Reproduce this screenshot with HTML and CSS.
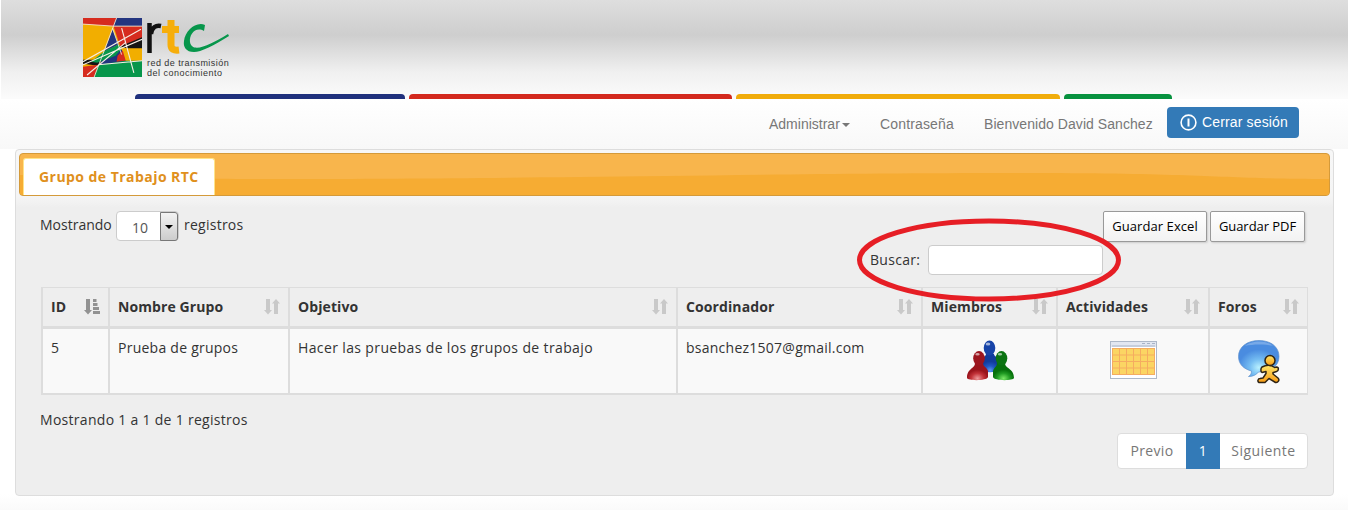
FILE: index.html
```
<!DOCTYPE html>
<html lang="es">
<head>
<meta charset="utf-8">
<title>Grupo de Trabajo RTC</title>
<link rel="stylesheet" href="styles.css">
</head>
<body>
<svg class="symbols" width="0" height="0">
  <symbol id="sort" viewBox="0 0 16 16"><path d="M2 0h4v11h2l-4 4.500L0 11h2zM10 15h4V4.500h2L12 0 8 4.500h2z"/></symbol>
  <symbol id="sort-asc" viewBox="0 0 16 16"><path d="M2 0h4v11h2L4 15.500 0 11h2zM9 0h3.500v3H9zM9 4h4.500v3H9zM9 8h6v3H9zM9 12h7v3H9z"/></symbol>
</svg>
<header class="banner">
  <div class="logo">
    <svg class="emblem" viewBox="0 0 58 58">
      <rect width="58" height="58" fill="#f2ae00"/>
      <path d="M0 0h33l-3 8L0 6z" fill="#d62c1f"/>
      <path d="M33 0h25v8H30z" fill="#23357f"/>
      <path d="M30 8h28v12L37 29z" fill="#d62c1f"/>
      <path d="M29 11l6 15-14 7z" fill="#23357f"/>
      <path d="M58 19v11H44l-8-2z" fill="#151515"/>
      <path d="M0 41l18 0-3 6-15-2z" fill="#151515"/>
      <path d="M16 46l4-8 18-7 4 12z" fill="#23357f"/>
      <path d="M8 43l14-11 13-6 3 4-6 7-18 7z" fill="#07964b"/>
      <path d="M38 30h20v12H42z" fill="#f2ae00"/>
      <path d="M34 37l5-5 3 10-9 1z" fill="#d62c1f"/>
      <path d="M0 48l15-2-4 12H0z" fill="#d62c1f"/>
      <path d="M15 46l27-4h16v16H11z" fill="#07964b"/>
      <g fill="none" stroke="#f6eee5" stroke-width=".8"><path d="M33 0L11 58M0 6l30 2h28M29 10l9 26"/><path d="M0 43l57-32M0 46l58-25M38 10l12 44M4 56l38-32M15 46l43-4" stroke-width="1.100"/></g>
    </svg>
    <div class="wordmark">
      <svg class="letters" viewBox="0 0 84 38">
        <path d="M2.500 35V5M4 16c1-7 5-9 10-8" fill="none" stroke="#111" stroke-width="4.500"/>
        <path d="M24 2v25q0 6 8 5M15 11.500h17" fill="none" stroke="#f6ae0b" stroke-width="7"/>
        <path d="M58 7l-1 6c-8-5-15 3-14 11 2 12 20 3 38-8l1 2C66 28 54 34 47 34c-8 0-11-5-10-11C38 13 49 3 58 7z" fill="#07964b"/>
      </svg>
      <p class="motto m1">red de transmisión</p>
      <p class="motto m2">del conocimiento</p>
    </div>
  </div>
  <div class="stripes"><i class="blue"></i><i class="red"></i><i class="yellow"></i><i class="green"></i></div>
</header>
<nav class="menu">
  <a class="admin">Administrar<b class="caret"></b></a>
  <a class="pass">Contraseña</a>
  <a class="user">Bienvenido David Sanchez</a>
  <a class="logout"><svg viewBox="0 0 17 17"><g fill="none" stroke="#fff" stroke-width="1.600"><circle cx="8.500" cy="8.500" r="7.400"/><path d="M8.500 4.500v8" stroke-width="2"/></g></svg><span>Cerrar sesión</span></a>
</nav>
<main class="panel">
  <div class="tabs">
    <svg class="wave" viewBox="0 0 1309 41" preserveAspectRatio="none"><path d="M0 21C80 21 130 25 250 25S450 24 560 23 810 19 1000 19 1200 25 1309 25V41H0z"/></svg>
    <div class="tab"><span>Grupo de Trabajo RTC</span></div>
  </div>
  <section class="content">
    <div class="tools">
      <div class="length"><span class="show">Mostrando</span><span class="select"><span class="num">10</span><span class="drop"><i></i></span></span><span class="regs">registros</span></div>
      <div class="exports"><button class="excel"><span>Guardar Excel</span></button><button class="pdf"><span>Guardar PDF</span></button></div>
    </div>
    <div class="search"><label for="q">Buscar:</label><input id="q" type="text"></div>
    <table>
      <colgroup><col class="c1"><col class="c2"><col class="c3"><col class="c4"><col class="c5"><col class="c6"><col class="c7"></colgroup>
      <thead><tr>
        <th><div>ID<svg class="on"><use href="#sort-asc"/></svg></div></th>
        <th><div>Nombre Grupo<svg><use href="#sort"/></svg></div></th>
        <th><div>Objetivo<svg><use href="#sort"/></svg></div></th>
        <th><div>Coordinador<svg><use href="#sort"/></svg></div></th>
        <th><div>Miembros<svg><use href="#sort"/></svg></div></th>
        <th><div>Actividades<svg><use href="#sort"/></svg></div></th>
        <th><div>Foros<svg><use href="#sort"/></svg></div></th>
      </tr></thead>
      <tbody><tr>
        <td>5</td>
        <td>Prueba de grupos</td>
        <td class="goal">Hacer las pruebas de los grupos de trabajo</td>
        <td class="mail">bsanchez1507@gmail.com</td>
        <td class="pic"><svg width="48" height="48" viewBox="0 0 48 48">
          <defs>
            <radialGradient id="pb" cx=".5" cy=".9"><stop offset="0" stop-color="#5f9bf0"/><stop offset=".5" stop-color="#2158c4"/><stop offset="1" stop-color="#123c9c"/></radialGradient>
            <radialGradient id="pr" cx=".5" cy=".9"><stop offset="0" stop-color="#ee9a9c"/><stop offset=".6" stop-color="#c23238"/><stop offset="1" stop-color="#9a141c"/></radialGradient>
            <radialGradient id="pg" cx=".5" cy=".9"><stop offset="0" stop-color="#7be866"/><stop offset=".6" stop-color="#1f9a22"/><stop offset="1" stop-color="#07700c"/></radialGradient>
          </defs>
          <path d="M20 18h8c0 3 5 3 6 7v9c-5 3-15 3-20 0v-9c1-4 6-4 6-7z" fill="url(#pb)"/><ellipse cx="23.500" cy="12" rx="5.800" ry="7.500" fill="#1744a8"/>
          <path d="M9 27h8c0 4 4 4 5 8v6c-1 4-20 4-21 1 0-10 8-9 8-15z" fill="url(#pr)"/><ellipse cx="13" cy="22.300" rx="5.800" ry="7.300" fill="#9c161f"/>
          <path d="M31 27h8c0 6 9 5 9 15-1 3-20 3-21-1v-6c1-4 4-4 4-8z" fill="url(#pg)"/><ellipse cx="35.500" cy="22.300" rx="5.800" ry="7.300" fill="#0b7412"/>
          <g fill="#fff" opacity=".6"><ellipse cx="22" cy="8" rx="2.300" ry="1.500"/><ellipse cx="11.500" cy="18.300" rx="2.200" ry="1.300"/><ellipse cx="34" cy="18.300" rx="2.200" ry="1.300"/></g>
        </svg></td>
        <td class="pic"><svg width="48" height="48" viewBox="0 0 48 48">
          <rect x="1.500" y="5.500" width="46" height="37" fill="#fff" stroke="#aeb8c8"/>
          <path d="M2 6h45v5H2z" fill="#e2e7f1"/><path d="M33 7.500h3m2 0h3m2 0h3M3 10h43" stroke="#a8b3c6"/>
          <path d="M3 12h43v27H3z" fill="#f5ac60"/>
          <g fill="#fbd563"><path d="M4 13h6v5.500H4zM11 13h6v5.500h-6zM18 13h6v5.500h-6zM25 13h6v5.500h-6zM32 13h6v5.500h-6zM39 13h6v5.500h-6zM4 19.500h6V25H4zM11 19.500h6V25h-6zM18 19.500h6V25h-6zM25 19.500h6V25h-6zM32 19.500h6V25h-6zM39 19.500h6V25h-6zM4 26h6v5.500H4zM11 26h6v5.500h-6zM18 26h6v5.500h-6zM25 26h6v5.500h-6zM32 26h6v5.500h-6zM39 26h6v5.500h-6zM4 32.500h6V38H4zM11 32.500h6V38h-6zM18 32.500h6V38h-6zM25 32.500h6V38h-6zM32 32.500h6V38h-6zM39 32.500h6V38h-6z"/></g>
        </svg></td>
        <td class="pic foro"><svg width="48" height="48" viewBox="0 0 48 48">
          <defs><radialGradient id="bub" cx=".5" cy=".75"><stop offset="0" stop-color="#b9f1ff"/><stop offset=".45" stop-color="#75bdf2"/><stop offset="1" stop-color="#4a8ce0"/></radialGradient>
          <linearGradient id="run" x2="0" y2="1"><stop offset="0" stop-color="#ffe66a"/><stop offset="1" stop-color="#f89b14"/></linearGradient></defs>
          <path d="M22 4.500C10 4.500 1.500 11 1.500 20.500c0 8 5.500 12.500 13 14.500 0 3-1 4-3 5.500 5 0 8-2 10-4.500C34 36 42 30 42 20.500 42 11 34 4.500 22 4.500z" fill="url(#bub)" stroke="#6090cc" stroke-width=".7"/>
          <path d="M8 10C14 4 31 4 36 10c-6-2-21-2-28 0z" fill="#fff" opacity=".25"/>
          <g fill="url(#run)" stroke="#2f2415" stroke-width="1.500" stroke-linejoin="round"><path d="M25 31c4-2 8-2 11-.5l1.500 1 2-.5c2.500 0 2.500 3.500 0 4.500l-3 1-.5 0v1.500l5 4c2 2 0 5-2.500 4.500L32 42.500l-4 4h-6c-2-1-1-4 1-4l3-.5 3-4.500v-2l-4 1c-1.500-1-1.500-4 0-5.500z"/><circle cx="33" cy="24.500" r="5"/></g>
        </svg></td>
      </tr></tbody>
    </table>
    <p class="info">Mostrando 1 a 1 de 1 registros</p>
    <div class="pager"><a class="prev">Previo</a><a class="current">1</a><a class="next">Siguiente</a></div>
  </section>
</main>
<svg class="highlight" viewBox="0 0 266 86"><ellipse cx="133" cy="43" rx="129.500" ry="39"/></svg>
</body>
</html>
```
FILE: styles.css
```
* { box-sizing: border-box; }
body { margin: 0; height: 510px; overflow: hidden; position: relative; background: linear-gradient(#fff 494px, #fafafa 510px); color: #333; font: 14px/20px "Open Sans", "Noto Sans", sans-serif; }
p { margin: 0; }
.symbols { position: absolute; }
.banner { height: 99px; display: flex; flex-direction: column; justify-content: space-between; margin-left: 1px; background: linear-gradient(#dedede 0, #cecece 35px, #f0f0f0 72px, #fbfbfb 98px); }
.logo { display: flex; padding: 18px 0 0 82px; }
.emblem { width: 59px; height: 59px; }
.wordmark { padding-left: 5px; width: 100px; }
.letters { display: block; width: 84px; height: 38px; }
.motto { font: 9px/9px "Liberation Sans", sans-serif; white-space: nowrap; color: #333; }
.m1 { letter-spacing: .45px; margin-top: 3px; }
.m2 { letter-spacing: .5px; margin-top: 1px; }
.stripes { display: flex; gap: 4px; margin-top: -1px; padding-left: 134px; }
.stripes i { height: 5px; border-radius: 4px 4px 0 0; }
.blue { width: 270px; background: #20317d; }
.red { width: 323px; background: #d3291e; }
.yellow { width: 324px; background: #f0ac0b; }
.green { width: 108px; background: #07923f; }
.menu { height: 50px; display: flex; justify-content: flex-end; align-items: flex-start; padding: 8px 49px 0 0; background: linear-gradient(#fff, #f8f8f8); font: 14px/20px "Liberation Sans", sans-serif; color: #777; white-space: nowrap; }
.menu .admin, .menu .pass, .menu .user { padding-top: 7px; }
.admin { width: 111px; }
.pass { width: 104px; letter-spacing: .15px; }
.user { width: 183px; letter-spacing: .06px; }
.caret { display: inline-block; margin-left: 2px; vertical-align: middle; border-top: 4px solid; border-left: 4px solid transparent; border-right: 4px solid transparent; }
.logout { display: flex; gap: 5px; width: 132px; height: 31px; padding: 5px 0 0 13px; border-radius: 4px; background: #337ab7; color: #fff; letter-spacing: .15px; }
.logout svg { width: 17px; height: 17px; margin-top: 2px; }
.panel { width: 1319px; height: 347px; margin-left: 15px; padding: 3px; border: 1px solid #ddd; border-radius: 4px; background: linear-gradient(#f7f7f7, #f5f5f5 46px, #eee 58px); }
.tabs { position: relative; height: 43px; padding: 4px 0 0 3px; border: 1px solid #d49a3a; border-radius: 4px; background: #f8b54c; overflow: hidden; }
.wave { position: absolute; left: 0; top: 0; width: 100%; height: 100%; }
.wave path { fill: #f6ac33; }
.tab { position: relative; width: 192px; height: 39px; padding: 8px 0 0 15px; border-radius: 3px 3px 0 0; border: 1px solid #ffe48a; border-bottom: 0; background: #fff; color: #e0901c; font-weight: 700; letter-spacing: .45px; white-space: nowrap; }
.content { padding: 15px 22px 0 21px; }
.tools { display: flex; justify-content: space-between; height: 34px; }
.length { display: flex; line-height: 28px; }
.show { width: 76px; }
.select { display: flex; justify-content: space-between; width: 63px; height: 30px; margin-right: 5px; border: 1px solid #ccc; border-radius: 4px; background: #fff; color: #555; line-height: 32px; }
.regs { letter-spacing: .25px; }
.num { padding-left: 15px; }
.drop { width: 18px; height: 29px; border: 1px solid #777; border-radius: 0 3px 3px 0; background: linear-gradient(#f3f3f3, #ccc); display: flex; align-items: center; justify-content: center; }
.drop i { border-top: 4px solid #000; border-left: 4px solid transparent; border-right: 4px solid transparent; }
.exports { display: flex; gap: 3px; padding-right: 3px; }
button { height: 31px; padding: 0; border: 1px solid #999; border-radius: 2px; background: linear-gradient(#fff, #f2f2f2); box-shadow: 1px 1px 2px #ccc; color: #000; font: 13px/29px "Open Sans", sans-serif; white-space: nowrap; }
.excel { width: 104px; letter-spacing: .08px; }
.pdf { width: 95px; letter-spacing: -.05px; }
.search { display: flex; height: 42px; padding-left: 830px; line-height: 30px; }
.search label { width: 58px; letter-spacing: .3px; }
.search input { width: 175px; height: 30px; border: 1px solid #ccc; border-radius: 4px; background: #fff; padding: 0 8px; }
table { width: 1267px; margin-left: 1px; table-layout: fixed; border-collapse: separate; border-spacing: 0; border-right: 1px solid #ddd; }
.c1 { width: 67px; } .c2 { width: 180px; } .c3 { width: 388px; } .c4 { width: 245px; } .c5 { width: 135px; } .c6 { width: 152px; } .c7 { width: 99px; }
th, td { border-left: 2px solid #ddd; text-align: left; vertical-align: top; white-space: nowrap; }
th { height: 42px; padding: 9px 8px 0 8px; border-top: 1px solid #ddd; border-bottom: 3px solid #ddd; letter-spacing: .1px; }
th div { display: flex; justify-content: space-between; }
th svg { width: 16px; height: 16px; margin-top: 2px; fill: #c9c9c9; }
th .on { fill: #929292; }
td { height: 66px; padding: 9px 7px 0 8px; border-bottom: 2px solid #ddd; background: #f9f9f9; letter-spacing: .25px; }
td.goal { letter-spacing: .37px; }
td.pic { text-align: center; padding: 7px 0 0; letter-spacing: 0; }
td.foro { padding-left: 4px; }
.pic svg { display: inline-block; }
.info { margin: 15px 0 3px; letter-spacing: .29px; }
.pager { display: flex; width: 191px; height: 36px; margin: 0 0 0 1077px; border: 1px solid #ddd; border-radius: 4px; background: #fff; color: #777; line-height: 34px; letter-spacing: .3px; }
.pager a { text-align: center; }
.prev { width: 68px; }
.current { width: 34px; height: 36px; margin-top: -1px; line-height: 36px; background: #337ab7; color: #fff; }
.next { width: 87px; letter-spacing: .45px; }
.highlight { position: absolute; left: 856px; top: 217px; width: 266px; height: 86px; fill: none; stroke: #e61e25; stroke-width: 5px; pointer-events: none; }
```
